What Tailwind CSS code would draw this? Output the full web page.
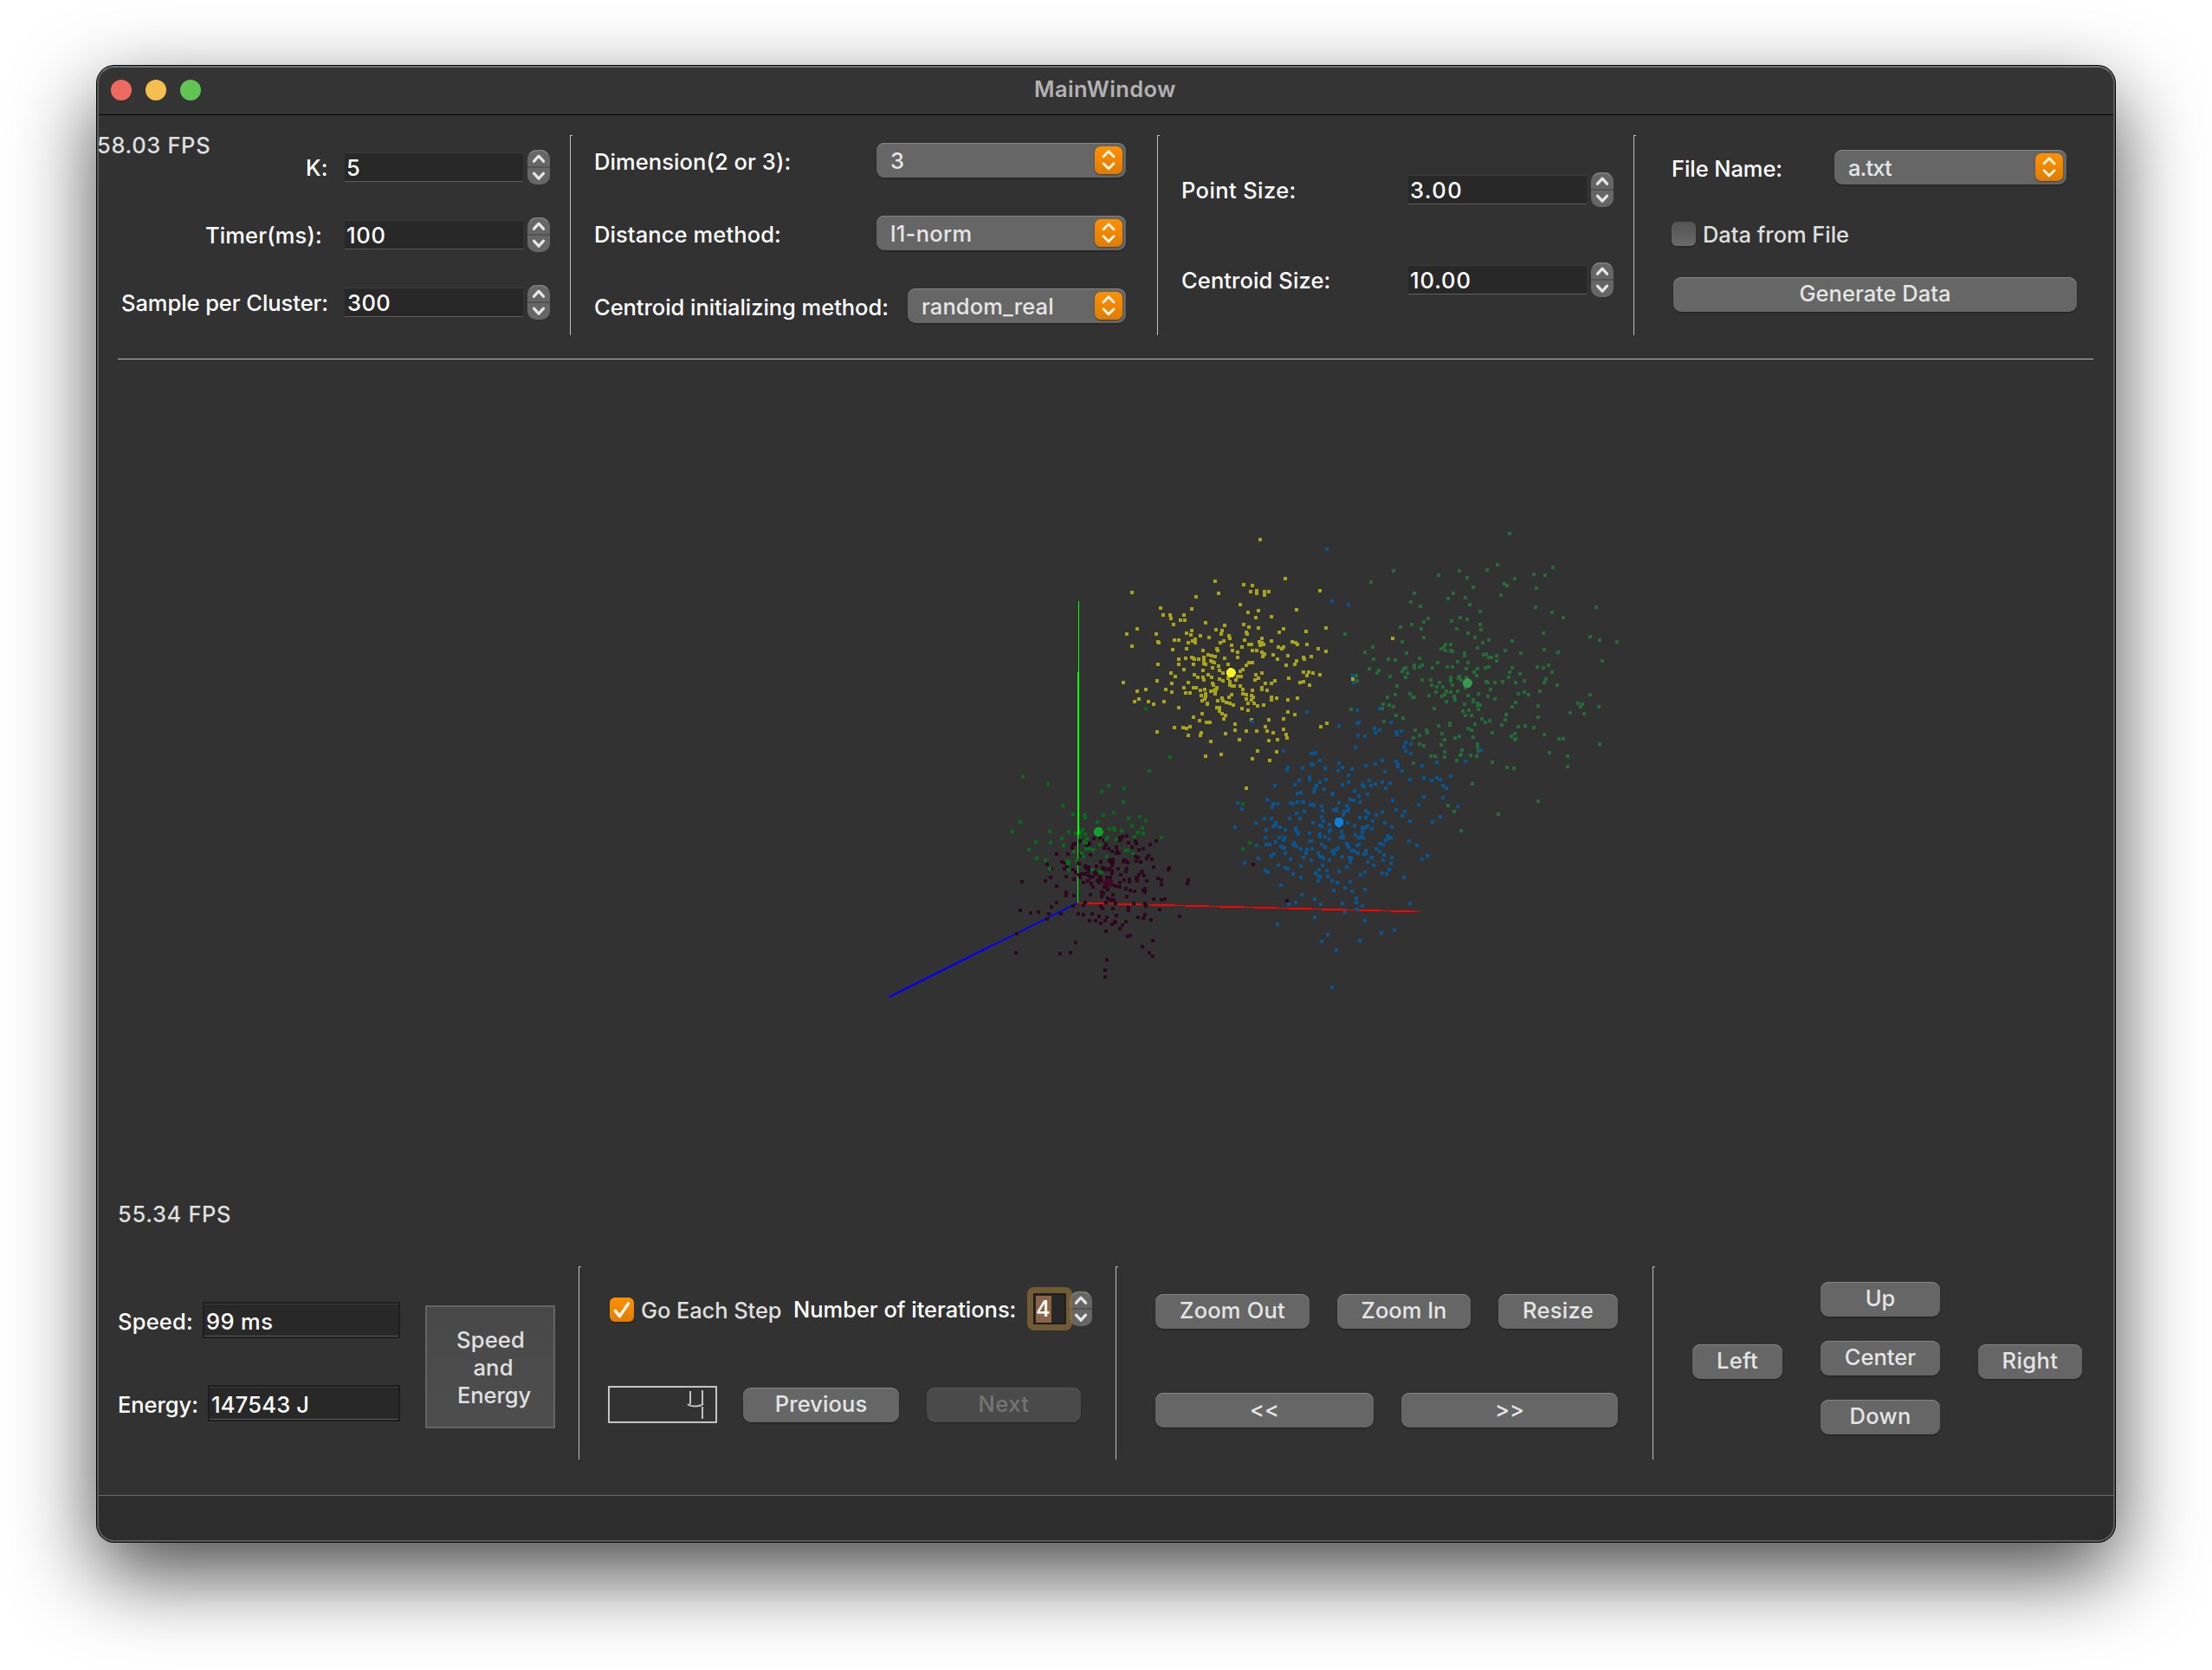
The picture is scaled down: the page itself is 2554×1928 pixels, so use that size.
<!DOCTYPE html>
<html lang="en">
<head>
<meta charset="utf-8">
<title>MainWindow</title>
<script src="https://cdn.jsdelivr.net/npm/@tailwindcss/browser@4"></script>
</head>
<body class="bg-white w-[2554px] h-[1928px] overflow-hidden pt-[76px] pl-[112px] font-[Inter,sans-serif] font-[450] text-[25.5px] leading-[30px] text-white whitespace-nowrap">

<svg class="hidden">
  <symbol id="stepper" viewBox="0 0 26 40">
    <rect x="0" y="0" width="26" height="40" rx="10" fill="#666"/>
    <path d="M3 4.5Q6 .6 11 .6h4q5 0 8 3.900" fill="none" stroke="#858585" stroke-width="1.200"/>
    <path d="M0 20h26" stroke="#525252" stroke-width="2"/>
    <path d="M7.500 13.200l5.500-6 5.500 6M7.500 27.200l5.500 6 5.500-6" fill="none" stroke="#e6e6e6" stroke-width="3.200" stroke-linecap="round" stroke-linejoin="round"/>
  </symbol>
  <symbol id="updown" viewBox="0 0 32 32">
    <path d="M10 11.800l6-6 6 6M10 19.800l6 6 6-6" fill="none" stroke="#fff" stroke-opacity=".9" stroke-width="3" stroke-linecap="round" stroke-linejoin="round"/>
  </symbol>
</svg>

<main class="relative w-[2330px] h-[1704px] rounded-[20px] bg-[#323232] shadow-[0_0_0_1px_#000,0_36px_96px_rgba(0,0,0,0.72)] overflow-hidden flex flex-col">
  <header class="h-[57px] shrink-0 bg-[#343434] border-b border-black flex items-center relative">
    <div class="flex gap-4 pl-4">
      <i class="size-6 rounded-full bg-[#ed6a5f]"></i>
      <i class="size-6 rounded-full bg-[#f5bf4f]"></i>
      <i class="size-6 rounded-full bg-[#61c554]"></i>
    </div>
    <h1 class="pl-[962px] pb-[2px] font-semibold tracking-[0.4px] text-[#b2b2b2]">MainWindow</h1>
  </header>

  <!-- settings -->
  <section class="h-[281px] shrink-0 flex items-start relative">
    <span class="absolute left-0 top-[20px] tracking-[0.65px] text-[#dfdfdf]">58.03 FPS</span>

    <div class="w-[546px] pt-10 flex flex-col gap-[38px]">
      <div class="h-10 flex">
        <label class="w-[286px] pl-[241px] pt-[6px] tracking-[0.3px]">K:</label>
        <div class="w-[206px] h-[34px] mt-[3px] bg-[#282828] border-t border-t-[#3d3d3d] border-b border-b-[#5c5c5c] pl-[2px] pt-[2px]">5</div>
        <svg class="ml-[5px] w-[26px] h-10"><use href="#stepper"/></svg>
      </div>
      <div class="h-10 flex">
        <label class="w-[286px] pl-[125px] pt-[6px] tracking-[0.12px]">Timer(ms):</label>
        <div class="w-[206px] h-[34px] mt-[3px] bg-[#282828] border-t border-t-[#3d3d3d] border-b border-b-[#5c5c5c] pl-[2px] pt-[2px] tracking-[0.7px]">100</div>
        <svg class="ml-[5px] w-[26px] h-10"><use href="#stepper"/></svg>
      </div>
      <div class="h-10 flex">
        <label class="w-[286px] pl-[28px] pt-[6px] tracking-[-0.06px]">Sample per Cluster:</label>
        <div class="w-[206px] h-[34px] mt-[3px] bg-[#282828] border-t border-t-[#3d3d3d] border-b border-b-[#5c5c5c] pl-[3px] pt-[2px] tracking-[0.4px]">300</div>
        <svg class="ml-[5px] w-[26px] h-10"><use href="#stepper"/></svg>
      </div>
    </div>

    <div class="w-[3px] h-[231px] mt-[23px] border-l border-t border-[#bebebe]"></div>

    <div class="w-[675px] pt-8 pl-[25px] flex flex-col gap-11">
      <div class="h-10 flex">
        <label class="w-[326px] pt-[7px] tracking-[0.08px]">Dimension(2 or 3):</label>
        <div class="w-[288px] h-10 rounded-[9px] bg-[#666] shadow-[inset_0_1px_0_#858585,0_1px_2px_rgba(0,0,0,0.4)] flex justify-between pl-[16px] pr-1 pt-1 text-[#e5e5e5]"><span class="pt-[2px]">3</span><svg class="size-8 rounded-[7px] bg-linear-to-b from-[#ff9100] to-[#df7c00] shadow-[0_1px_2px_rgba(0,0,0,0.4)]"><use href="#updown"/></svg></div>
      </div>
      <div class="h-10 flex">
        <label class="w-[326px] pt-[7px] tracking-[0.1px]">Distance method:</label>
        <div class="w-[288px] h-10 rounded-[9px] bg-[#666] shadow-[inset_0_1px_0_#858585,0_1px_2px_rgba(0,0,0,0.4)] flex justify-between pl-[16px] pr-1 pt-1 text-[#e5e5e5]"><span class="pt-[2px] tracking-[0.3px]">l1-norm</span><svg class="size-8 rounded-[7px] bg-linear-to-b from-[#ff9100] to-[#df7c00] shadow-[0_1px_2px_rgba(0,0,0,0.4)]"><use href="#updown"/></svg></div>
      </div>
      <div class="h-10 flex">
        <label class="w-[362px] pt-[7px] tracking-[-0.05px]">Centroid initializing method:</label>
        <div class="w-[252px] h-10 rounded-[9px] bg-[#666] shadow-[inset_0_1px_0_#858585,0_1px_2px_rgba(0,0,0,0.4)] flex justify-between pl-[16px] pr-1 pt-1 text-[#e5e5e5]"><span class="pt-[2px] tracking-[0.1px]">random_real</span><svg class="size-8 rounded-[7px] bg-linear-to-b from-[#ff9100] to-[#df7c00] shadow-[0_1px_2px_rgba(0,0,0,0.4)]"><use href="#updown"/></svg></div>
      </div>
    </div>

    <div class="w-[3px] h-[231px] mt-[23px] border-l border-t border-[#bebebe]"></div>

    <div class="w-[547px] pt-[66px] pl-[25px] flex flex-col gap-16">
      <div class="h-10 flex">
        <label class="w-[262px] pt-[6px] tracking-[0.4px]">Point Size:</label>
        <div class="w-[206px] h-[34px] mt-[3px] bg-[#282828] border-t border-t-[#3d3d3d] border-b border-b-[#5c5c5c] pl-[2px] pt-[2px] tracking-[1.4px]">3.00</div>
        <svg class="ml-[5px] w-[26px] h-10"><use href="#stepper"/></svg>
      </div>
      <div class="h-10 flex">
        <label class="w-[262px] pt-[6px] tracking-[0.1px]">Centroid Size:</label>
        <div class="w-[206px] h-[34px] mt-[3px] bg-[#282828] border-t border-t-[#3d3d3d] border-b border-b-[#5c5c5c] pl-[2px] pt-[2px] tracking-[0.9px]">10.00</div>
        <svg class="ml-[5px] w-[26px] h-10"><use href="#stepper"/></svg>
      </div>
    </div>

    <div class="w-[3px] h-[231px] mt-[23px] border-l border-t border-[#bebebe]"></div>

    <div class="pt-10 pl-[41px]">
      <div class="h-10 flex">
        <label class="w-[188px] pt-[7px] tracking-[-0.08px]">File Name:</label>
        <div class="w-[268px] h-10 rounded-[9px] bg-[#666] shadow-[inset_0_1px_0_#858585,0_1px_2px_rgba(0,0,0,0.4)] flex justify-between pl-[16px] pr-1 pt-1 text-[#e5e5e5]"><span class="pt-[2px] tracking-[-0.9px]">a.txt</span><svg class="size-8 rounded-[7px] bg-linear-to-b from-[#ff9100] to-[#df7c00] shadow-[0_1px_2px_rgba(0,0,0,0.4)]"><use href="#updown"/></svg></div>
      </div>
      <div class="flex mt-[43px] text-[#dfdfdf]">
        <i class="size-7 rounded-[6px] bg-linear-to-b from-[#545454] to-[#6a6a6a] shadow-[0_1px_2px_rgba(0,0,0,0.4)]"></i>
        <span class="pl-[8px] tracking-[-0.05px]">Data from File</span>
      </div>
      <button class="block w-[466px] h-10 mt-[34px] ml-[2px] rounded-[9px] bg-[#666] shadow-[inset_0_1px_0_#858585,0_1px_2px_rgba(0,0,0,0.4)] text-[#e5e5e5] pb-[3px] tracking-[0px]">Generate Data</button>
    </div>
  </section>

  <!-- scatter view -->
  <section class="relative h-[1025px] shrink-0">
    <div class="mx-6 mr-[25px] h-px bg-[#bebebe]"></div>
    <svg class="absolute left-0 top-0 w-[2330px] h-[1025px]" viewBox="112 414 2330 1025" id="plot" shape-rendering="crispEdges" fill="none">
      <path stroke="#0f0" d="M1245.500 694v82M1244.500 965v77"/>
      <path stroke="#0f0" stroke-width="2" d="M1245 776v189"/>
      <path stroke="#00f" stroke-width="2" d="M1244 1042.500L1026.500 1151"/>
      <path stroke="#f00" stroke-width="1.700" d="M1244 1042.500L1639 1052.500"/>
    </svg>
    <span class="absolute left-[24px] top-[973px] tracking-[0.65px] text-[#dfdfdf]">55.34 FPS</span>
  </section>

  <!-- controls -->
  <section class="h-[287px] shrink-0 flex items-start">
    <div class="w-[556px] flex pl-[24px]">
      <div class="w-[326px] pt-[64px] flex flex-col gap-[54px]">
        <div class="h-[42px] flex">
          <label class="w-[98px] pt-[8px] tracking-[0.2px]">Speed:</label>
          <div class="w-[228px] h-[42px] bg-[#1e1e1e] p-[2px]"><div class="h-[38px] bg-[#282828] border-t border-t-[#3d3d3d] border-b border-b-[#5c5c5c] pl-[2px] pt-[5px] tracking-[0.4px]">99 ms</div></div>
        </div>
        <div class="h-[42px] flex">
          <label class="w-[104px] pt-[8px] tracking-[-0.05px]">Energy:</label>
          <div class="w-[222px] h-[42px] bg-[#1e1e1e] p-[2px]"><div class="h-[38px] bg-[#282828] border-t border-t-[#3d3d3d] border-b border-b-[#5c5c5c] pl-[2px] pt-[5px] tracking-[0.2px]">147543 J</div></div>
        </div>
      </div>
      <button class="ml-[29px] mt-[68px] w-[150px] h-[142px] bg-linear-to-b from-[#484848] to-[#4e4e4e] border-2 border-[#646464] text-[#e0e0e0] leading-8 tracking-[0.2px] flex flex-col items-center pt-[22px]">
        <span class="pl-[1px]">Speed</span><span class="pl-[7px]">and</span><span class="pl-[9px] tracking-[-0.1px]">Energy</span>
      </button>
    </div>

    <div class="w-[3px] h-[223px] mt-[23px] border-l border-t border-[#bebebe]"></div>

    <div class="w-[617px] pt-[52px] pl-[33px]">
      <div class="h-10 flex">
        <svg class="size-7 mt-[7px] rounded-[6px] bg-linear-to-b from-[#ff9100] to-[#df7c00] shadow-[0_1px_2px_rgba(0,0,0,0.4)]" viewBox="0 0 28 28"><path d="M6.500 15.500l5 6L21.500 7" fill="none" stroke="#fff" stroke-opacity=".92" stroke-width="3.600" stroke-linecap="round" stroke-linejoin="round"/></svg>
        <span class="w-[184px] pl-[8px] pt-[7px] tracking-[-0.1px] text-[#dfdfdf]">Go Each Step</span>
        <label class="w-[270px] pt-[6px] tracking-[-0.03px]">Number of iterations:</label>
        <div class="relative z-10 w-[52px] h-[50px] -mt-[5px] rounded-[8px] border-7 border-[#8d6b35]/70 p-0">
          <div class="w-[38px] h-9 bg-[#282828] border-2 border-[#1e1e1e] pl-[1px] pt-[1px]"><div class="w-[18px] h-[31px] bg-[#8a6446] pt-0"><span class="block">4</span></div></div>
        </div>
        <svg class="-ml-[3px] w-[26px] h-10"><use href="#stepper"/></svg>
      </div>
      <div class="flex mt-[69px] -ml-[2px]">
        <svg class="w-[126px] h-[43px]" viewBox="0 0 126 43" fill="none" stroke="#c4c4c4"><path stroke-width="2" d="M1 1h124v41H1z"/><path stroke-width="2" d="M95 6v15M109 5v16M109 24v14"/><path stroke-width="2" d="M92 21q3 2.500 9 2.500t9-3"/></svg>
        <button class="ml-[30px] mt-[2px] w-[180px] h-10 rounded-[9px] bg-[#666] shadow-[inset_0_1px_0_#858585,0_1px_2px_rgba(0,0,0,0.4)] text-[#e5e5e5] pb-[3px] tracking-[0.1px]">Previous</button>
        <button class="ml-8 mt-[2px] w-[178px] h-10 rounded-[9px] bg-[#4a4a4a] shadow-[inset_0_1px_0_#585858,0_1px_2px_rgba(0,0,0,0.3)] text-[#747474] pb-[3px] tracking-[0.5px]">Next</button>
      </div>
    </div>

    <div class="w-[3px] h-[223px] mt-[23px] border-l border-t border-[#bebebe]"></div>

    <div class="w-[617px] pt-[55px] pl-[43px] text-[#e5e5e5]">
      <div class="flex gap-8">
        <button class="w-[178px] h-10 rounded-[9px] bg-[#666] shadow-[inset_0_1px_0_#858585,0_1px_2px_rgba(0,0,0,0.4)] pb-[3px] tracking-[0.2px]">Zoom Out</button>
        <button class="w-[154px] h-10 rounded-[9px] bg-[#666] shadow-[inset_0_1px_0_#858585,0_1px_2px_rgba(0,0,0,0.4)] pb-[3px] tracking-[0px]">Zoom In</button>
        <button class="w-[138px] h-10 rounded-[9px] bg-[#666] shadow-[inset_0_1px_0_#858585,0_1px_2px_rgba(0,0,0,0.4)] pb-[3px] tracking-[0.3px]">Resize</button>
      </div>
      <div class="flex gap-8 mt-[74px]">
        <button class="w-[252px] h-10 rounded-[9px] bg-[#666] shadow-[inset_0_1px_0_#858585,0_1px_2px_rgba(0,0,0,0.4)] pb-[3px]">&lt;&lt;</button>
        <button class="w-[250px] h-10 rounded-[9px] bg-[#666] shadow-[inset_0_1px_0_#858585,0_1px_2px_rgba(0,0,0,0.4)] pb-[3px]">&gt;&gt;</button>
      </div>
    </div>

    <div class="w-[3px] h-[223px] mt-[23px] border-l border-t border-[#bebebe]"></div>

    <div class="pt-[41px] pl-[43px] flex text-[#e5e5e5]">
      <button class="mt-[72px] w-[104px] h-10 rounded-[9px] bg-[#666] shadow-[inset_0_1px_0_#858585,0_1px_2px_rgba(0,0,0,0.4)] pb-[3px] tracking-[0.3px]">Left</button>
      <div class="mx-11 flex flex-col gap-7">
        <button class="w-[138px] h-10 rounded-[9px] bg-[#666] shadow-[inset_0_1px_0_#858585,0_1px_2px_rgba(0,0,0,0.4)] pb-[3px]">Up</button>
        <button class="w-[138px] h-10 rounded-[9px] bg-[#666] shadow-[inset_0_1px_0_#858585,0_1px_2px_rgba(0,0,0,0.4)] pb-[3px]">Center</button>
        <button class="w-[138px] h-10 rounded-[9px] bg-[#666] shadow-[inset_0_1px_0_#858585,0_1px_2px_rgba(0,0,0,0.4)] pb-[3px] tracking-[0.3px]">Down</button>
      </div>
      <button class="mt-[72px] w-[120px] h-10 rounded-[9px] bg-[#666] shadow-[inset_0_1px_0_#858585,0_1px_2px_rgba(0,0,0,0.4)] pb-[3px] tracking-[0.4px]">Right</button>
    </div>
  </section>

  <footer class="grow border-t border-[#6a6a6a] bg-[#2d2d2d]"></footer>
  <div class="absolute inset-0 rounded-[20px] border-2 border-[#5c5c5c] border-t-[#747474]"></div>
</main>

<script>
// Samples and centroids, one entry per cluster; x y pairs are in thirds of a pixel from the cluster's origin.
const clusters = [
 {ox:1260, oy:590, color:'#a8a317', centroid:[484,560,'#f9f420'], pts:`585 98 429 242 671 235 527 255 557 257 552 278 573 277 574 286 599 280 600 291 615 279 791 275 140 282 441 286 363 297 515 325 240 337 249 360 273 359 277 371 284 392 308 378 323 378 320 359 349 339 542 351 579 346 569 368 624 366 711 342 396 386 461 396 432 411 529 392 546 402 579 405 666 408 651 420 743 417 813 405 160 407 123 426 225 426 140 468 230 452 234 455 287 447 303 446 330 424 347 415 344 428 378 432 336 455 350 450 361 443 361 455 357 450 409 439 453 415 450 425 447 455 459 449 476 432 479 441 486 465 489 482 507 489 507 507 521 470 531 446 537 419 540 425 546 462 554 462 557 482 573 482 583 452 584 464 590 441 596 462 590 455 591 489 600 494 594 503 596 499 623 450 630 497 645 512 648 470 660 476 666 471 681 500 696 452 708 455 714 461 746 461 786 477 762 504 814 486 735 507 737 513 710 519 704 530 675 533 329 476 282 480 303 513 303 531 326 510 347 507 353 511 357 513 371 513 387 483 390 507 390 519 405 497 417 500 429 503 436 477 437 483 413 518 420 521 425 524 441 537 420 543 461 509 474 531 444 551 456 560 397 531 389 528 354 532 320 548 387 551 537 533 545 524 551 525 557 524 524 549 516 555 231 531 275 561 291 574 227 588 258 618 189 618 159 623 111 594 149 660 164 652 198 660 215 670 252 659 279 597 279 626 321 612 327 630 335 594 342 631 353 612 362 612 357 567 369 575 387 575 390 584 405 567 417 576 420 597 423 603 443 582 456 588 473 579 481 591 480 602 489 605 495 605 501 586 507 573 519 573 515 605 569 567 566 585 580 578 590 561 590 611 590 617 609 621 602 597 624 597 636 588 683 579 722 594 736 590 735 558 753 557 769 560 748 569 792 566 755 603 379 622 380 640 393 617 396 632 396 643 394 650 385 658 403 670 401 666 413 623 425 622 431 617 434 612 430 629 428 633 453 647 456 658 467 663 480 665 477 644 486 637 493 672 437 657 434 682 443 682 445 694 453 702 466 708 460 721 384 702 355 714 375 726 400 733 411 733 524 618 526 632 537 636 537 650 554 638 554 653 561 645 558 621 565 666 542 666 575 674 597 672 521 684 544 690 624 645 624 655 642 649 681 653 713 648 682 695 705 705 666 719 555 722 615 722 304 681 227 766 288 750 317 750 330 753 343 747 335 777 380 768 378 777 413 798 466 771 497 738 497 759 537 762 573 762 603 747 608 763 630 767 666 757 675 774 678 786 645 792 616 795 512 792 576 831 642 833 618 864 558 858 451 843 396 849 537 960 795 748 815 735 906 581 1044 441`},
 {ox:1540, oy:590, color:'#246b38', centroid:[463,596,'#36984f'], pts:`609 79 567 186 531 204 434 208 362 222 207 206 130 246 462 232 483 264 627 234 693 219 731 222 760 195 591 252 600 258 579 292 702 266 699 334 755 351 795 369 909 332 887 434 921 447 981 452 930 519 279 284 266 314 301 330 396 303 414 286 456 301 471 324 507 348 328 372 312 384 303 408 269 393 231 401 408 381 426 408 437 369 462 374 508 393 509 411 465 423 312 438 238 453 489 438 517 455 537 447 617 450 727 423 730 480 776 489 135 471 108 489 138 513 188 513 212 516 252 491 40 426 387 463 405 462 381 471 371 478 388 482 405 482 412 487 452 491 453 501 498 474 593 483 648 493 564 501 564 518 519 497 527 495 537 507 545 507 297 510 360 524 429 521 465 524 393 540 411 539 305 534 296 539 279 533 279 544 243 546 249 543 238 555 255 560 249 575 155 551 149 560 123 546 195 573 343 543 458 546 486 558 498 546 494 570 525 542 537 540 617 543 609 558 606 576 645 564 705 539 726 542 744 534 756 557 735 582 729 594 774 603 714 623 78 570 81 587 218 606 213 635 187 645 263 632 273 645 278 645 305 585 335 585 338 603 366 594 357 609 378 610 354 627 329 638 404 576 404 587 411 603 436 573 433 580 440 584 458 576 455 611 390 625 404 627 384 635 376 641 390 659 417 643 419 653 429 623 464 638 502 633 527 590 533 594 559 594 585 591 543 618 533 643 557 651 630 594 660 588 660 628 675 635 639 633 631 663 618 678 708 675 887 635 918 677 846 665 860 670 855 677 867 702 818 699 454 670 482 655 483 659 497 665 499 673 508 672 501 687 467 689 446 692 456 708 477 707 513 719 540 726 525 732 490 738 597 705 594 723 582 741 549 768 639 746 662 744 694 750 708 714 729 774 780 788 796 789 921 806 747 836 810 850 810 884 172 668 192 672 207 677 168 683 60 686 217 707 240 717 174 729 348 684 362 744 402 734 401 741 282 760 297 777 322 759 325 768 275 786 297 808 312 812 374 771 383 792 371 810 384 833 383 853 336 848 351 849 276 873 420 786 435 779 465 752 477 760 483 784 498 806 498 816 500 832 494 848 473 845 444 827 441 843 437 846 426 865 627 771 615 780 630 788 626 793 549 869 600 887 624 892 481 945 709 1005 570 1050 396 1020 418 1042 441 1108`},
 {ox:1400, oy:800, color:'#095592', centroid:[438,448,'#0c80d6'], pts:`396 -498 415 -318 470 -306 482 -60 490 -36 137 99 326 66 246 201 437 113 500 60 501 104 507 103 580 54 618 103 561 123 563 137 580 128 504 146 528 149 636 134 638 143 653 131 496 189 669 170 663 185 669 200 686 177 686 209 636 237 641 249 643 255 657 270 726 252 777 240 876 237 930 197 825 288 342 210 351 209 357 207 372 234 342 245 347 248 262 257 258 267 312 260 391 261 437 243 451 257 435 270 482 264 531 252 564 247 588 234 597 274 471 284 470 309 335 291 336 300 299 303 285 318 215 321 392 300 372 310 360 320 353 330 351 341 386 333 450 318 413 347 417 350 293 347 307 345 519 318 525 324 543 303 549 322 564 315 588 309 614 312 601 329 492 339 507 357 537 352 684 299 731 294 758 302 778 293 789 300 797 322 810 329 797 363 732 361 714 386 849 393 790 429 762 446 624 372 636 406 665 410 657 427 684 443 680 512 707 527 743 564 726 577 189 370 210 383 225 383 207 396 270 381 279 384 293 378 312 377 316 377 339 387 347 387 350 391 378 393 381 407 318 411 291 416 303 435 267 436 181 435 203 435 219 450 210 463 235 465 219 459 186 473 150 450 87 380 102 401 78 464 252 473 287 468 289 473 294 482 297 489 183 500 230 500 249 500 246 509 219 516 185 524 197 525 237 530 242 533 249 537 152 527 159 572 251 555 213 558 204 563 271 575 227 597 183 615 192 621 252 606 261 608 280 627 278 525 282 518 291 531 305 540 326 543 323 555 314 570 345 540 342 578 336 513 343 513 336 485 348 450 372 458 378 461 383 445 377 428 405 455 408 474 405 480 372 488 372 499 391 498 405 506 378 524 390 534 366 555 371 567 377 568 384 572 404 578 439 381 421 406 428 402 430 408 456 410 467 408 465 390 470 399 477 369 488 371 510 379 452 424 531 408 540 417 510 432 530 432 554 444 566 422 588 411 468 450 492 458 447 480 449 494 444 502 453 502 495 491 507 500 516 498 522 500 520 483 519 468 525 467 531 465 537 461 551 470 598 450 620 464 606 495 608 504 618 502 600 510 579 522 592 525 465 521 467 531 472 534 435 537 428 543 422 545 415 549 420 558 481 546 486 547 492 548 504 555 501 528 507 525 531 545 530 554 526 559 567 540 580 549 594 560 591 578 537 585 552 570 557 597 450 567 473 569 479 573 477 585 465 603 437 618 396 615 380 597 369 612 357 623 366 633 372 635 399 636 306 600 306 638 366 651 414 651 433 657 477 654 513 629 528 621 587 624 603 627 611 612 617 591 620 569 663 638 237 665 308 698 354 713 376 732 287 726 265 732 419 684 459 675 483 687 528 682 499 712 497 726 519 737 451 728 459 759 684 728 502 751 353 777 225 801 527 788 399 837 377 861 509 857 585 832 629 822 429 891 415 1020 111 587`},
 {ox:1010, oy:680, color:'#2e061f', centroid:[810,1017,'#400829'], pts:`873 854 857 858 849 862 847 870 852 868 903 872 907 883 890 893 929 899 914 903 954 886 974 873 879 878 837 893 801 884 796 869 779 860 758 863 743 882 736 888 711 873 693 882 687 886 684 898 669 918 630 918 713 920 748 921 795 897 810 900 822 909 841 910 847 914 836 915 902 926 911 930 906 942 921 945 943 933 948 924 960 936 966 963 1019 965 1017 971 865 939 870 942 862 946 876 949 825 935 813 939 817 945 824 947 822 956 783 944 768 960 741 962 728 961 731 967 741 969 742 977 709 951 666 960 658 949 647 946 597 954 611 968 657 968 687 971 697 981 663 996 609 998 592 1011 630 1028 510 1014 690 1004 708 990 711 999 717 986 729 986 741 992 748 998 756 995 738 1012 749 1020 722 1017 755 1032 763 980 767 986 781 995 784 1001 789 967 796 966 793 974 807 972 813 969 822 975 821 981 823 985 843 969 852 990 870 978 873 969 816 998 805 998 771 1010 778 1006 778 1016 785 1012 798 1024 795 1032 805 1034 807 1041 818 1024 825 1025 836 1029 848 1031 849 1017 863 1008 882 1004 883 1014 870 1038 884 1044 900 1047 873 1064 923 978 927 981 914 990 909 998 906 1002 909 1012 932 994 941 1011 980 1001 992 1009 993 1024 1087 1008 1083 1021 936 1038 930 1044 936 1051 966 1075 992 1076 1005 1074 787 1049 793 1053 785 1065 825 1059 807 1070 815 1077 829 1077 801 1085 833 1088 748 1060 689 1061 662 1050 664 1062 630 1085 613 1101 686 1097 730 1086 723 1096 783 1099 790 1107 824 1107 879 1105 879 1112 897 1089 936 1088 938 1097 987 1110 1056 1134 936 1128 931 1139 912 1137 957 1146 705 1124 722 1128 753 1124 777 1134 804 1137 836 1131 798 1149 784 1157 764 1149 743 1150 830 1152 835 1155 822 1162 858 1165 870 1152 850 1177 801 1186 885 1199 877 1203 962 1218 927 1239 951 1260 962 1272 803 1283 799 1320 797 1344 696 1223 678 1260 641 1263 489 1259 492 1194 504 1112 540 1122 568 1119 602 1125 645 1126 598 1143 1310 954 1428 1080`},
 {ox:1010, oy:680, color:'#076b1b', centroid:[775,841,'#0fa32b'], pts:`938 413 1022 581 951 630 513 650 599 675 811 681 864 689 785 702 862 738 651 749 686 779 727 782 730 791 791 783 828 774 771 806 504 806 477 840 607 840 672 840 695 846 720 834 714 843 729 849 735 864 711 858 648 863 653 888 608 879 558 876 533 903 560 932 591 939 605 969 673 972 665 942 668 950 672 946 691 909 717 915 724 927 699 939 732 900 745 899 756 903 726 875 732 880 779 885 801 867 807 862 812 831 828 828 830 834 855 836 837 867 879 796 918 789 939 802 891 819 927 828 912 843 929 845 899 859 993 860 870 905 875 905 893 915 805 927 752 972 779 982 787 982 1275 743 1300 878 1276 901`},
];
const NS = 'http://www.w3.org/2000/svg', plot = document.getElementById('plot');
for (const c of clusters) {
  const n = c.pts.split(' ').map(Number);
  let d = '';
  for (let i = 0; i < n.length; i += 2)
    d += `M${Math.round(c.ox + n[i] / 3) - 2} ${Math.round(c.oy + n[i + 1] / 3)}h4`;
  const dots = document.createElementNS(NS, 'path');
  dots.setAttribute('d', d);
  dots.setAttribute('stroke', c.color);
  dots.setAttribute('stroke-width', 4);
  plot.append(dots);
}
for (const c of clusters) {
  const [x, y, fill] = c.centroid, dot = document.createElementNS(NS, 'circle');
  dot.setAttribute('cx', c.ox + x / 3);
  dot.setAttribute('cy', c.oy + y / 3);
  dot.setAttribute('r', 5.5);
  dot.setAttribute('fill', fill);
  plot.append(dot);
}
</script>
</body>
</html>
